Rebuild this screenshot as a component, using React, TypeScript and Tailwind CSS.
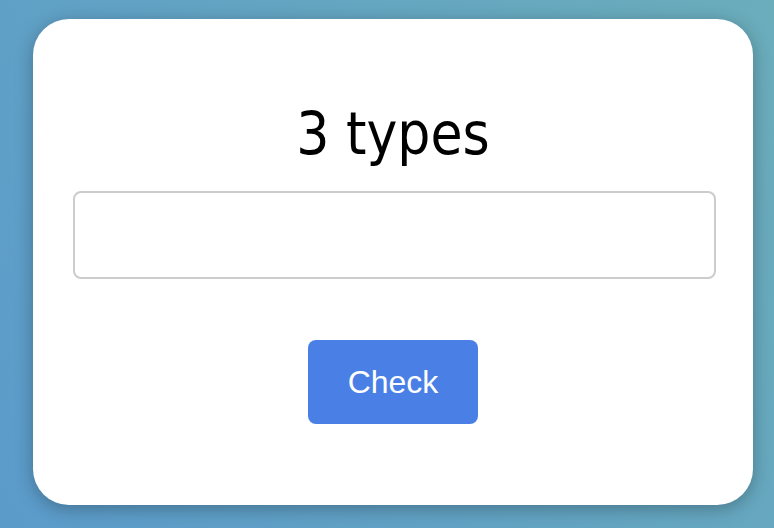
import React from 'react';

const App: React.FC = () => {
  return (
    <div className="h-[528px] w-[774px] overflow-hidden bg-[linear-gradient(60deg,#5b9bcb,#6badbb)] pl-[33px] pt-[19px]">
      <div className="flex h-[486px] w-[720px] flex-col items-center rounded-[36px] bg-white pt-[86px] shadow-[0_4px_18px_rgba(0,0,0,0.28)]">
        <h1
          className="h-[58px] text-[58px] leading-none text-black"
          style={{ fontFamily: '"DejaVu Sans Condensed", "DejaVu Sans", sans-serif', fontStretch: 'condensed' }}
        >
          3 types
        </h1>
        <input
          type="text"
          className="mt-[28px] ml-10 h-[88px] w-[643px] self-start rounded-lg border-2 border-[#cccccc] bg-white px-3 outline-none"
        />
        <button className="mt-[61px] h-[84px] w-[170px] rounded-lg bg-[#4a80e5] text-[32px] text-white font-['Liberation_Sans',Arial,sans-serif]">
          Check
        </button>
      </div>
    </div>
  );
};

export default App;
